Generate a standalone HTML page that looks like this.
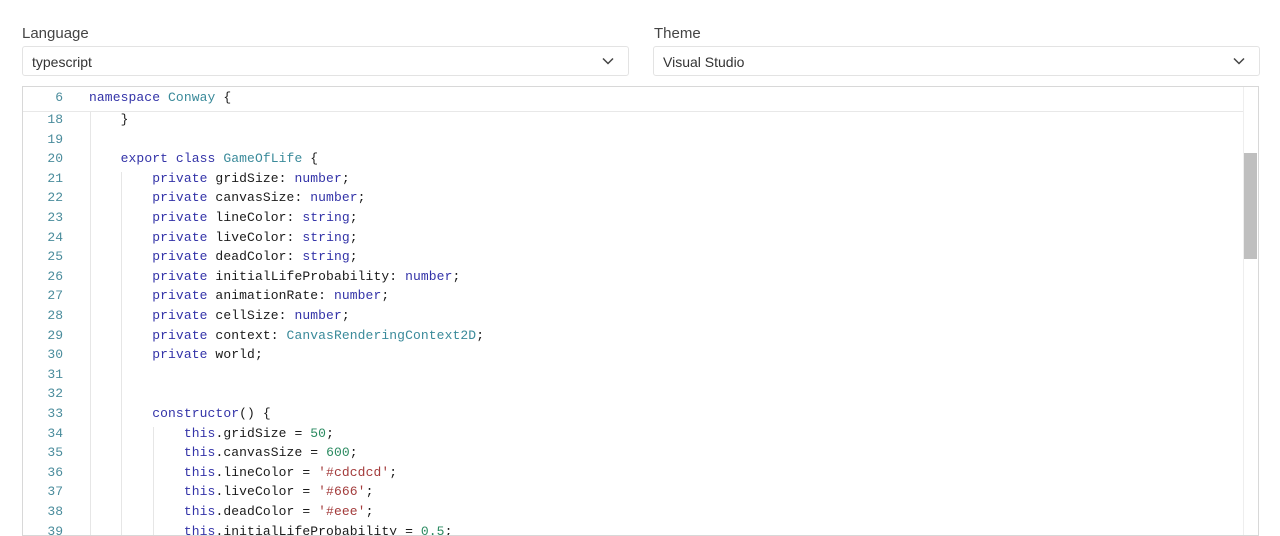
<!DOCTYPE html>
<html><head><meta charset="utf-8"><style>
body{margin:0;width:1280px;height:524px;background:#fff;font-family:"Liberation Sans",sans-serif;overflow:hidden;position:relative}
.lbl{position:absolute;top:25px;font-size:15px;color:#444}
.sel{position:absolute;top:46px;height:30px;border:1px solid #e3e3e3;box-sizing:border-box;border-radius:3px;font-size:14px;color:#333;line-height:30px;padding-left:9px}
.sel svg{position:absolute;right:14px;top:10px}
.ed{position:absolute;left:22px;top:86px;width:1237px;height:450px;border:1px solid #d8d8d8;box-sizing:border-box;overflow:hidden}
.sb{position:absolute;right:0;top:0;width:14px;height:100%;border-left:1px solid #eee;background:#fff}
.th{position:absolute;right:1px;top:66px;width:13px;height:106px;background:#bfbfbf}
.ln{position:absolute;left:0;width:40px;text-align:right;color:#4a8c9c;font-family:"Liberation Mono",monospace;font-size:13px}
.cd{position:absolute;left:66px;font-family:"Liberation Mono",monospace;font-size:13px;color:#1a1a1a;white-space:pre;letter-spacing:0.1px}
.k{color:#3333a8}.t{color:#3a8a9a}.s{color:#a33b3b}.n{color:#2a8a60}
.g{position:absolute;width:1px;background:#e6e6e6}
.sticky{position:absolute;left:0;top:0;right:14px;height:24px;border-bottom:1px solid #e8e8e8;background:#fff}
</style></head><body>
<div class="lbl" style="left:22px">Language</div>
<div class="sel" style="left:22px;width:607px">typescript<svg width="12" height="8" viewBox="0 0 12 8"><path d="M1 1.5 6 6.5 11 1.5" fill="none" stroke="#444" stroke-width="1.5"/></svg></div>
<div class="lbl" style="left:654px">Theme</div>
<div class="sel" style="left:653px;width:607px">Visual Studio<svg width="12" height="8" viewBox="0 0 12 8"><path d="M1 1.5 6 6.5 11 1.5" fill="none" stroke="#444" stroke-width="1.5"/></svg></div>
<div class="ed">
<div class="g" style="left:67px;top:24px;height:430px"></div>
<div class="g" style="left:98px;top:85px;height:370px"></div>
<div class="g" style="left:130px;top:340px;height:120px"></div>
<div class="sticky"></div>
<div class="ln" style="top:3px">6</div><div class="cd" style="top:3px"><span class="k">namespace</span> <span class="t">Conway</span> {</div>
<div id="L"></div>
<div class="sb"><div class="th"></div></div>
</div>
<script>
var lines=[
[18,'    }'],[19,''],[20,'    <span class="k">export class</span> <span class="t">GameOfLife</span> {'],
[21,'        <span class="k">private</span> gridSize: <span class="k">number</span>;'],
[22,'        <span class="k">private</span> canvasSize: <span class="k">number</span>;'],
[23,'        <span class="k">private</span> lineColor: <span class="k">string</span>;'],
[24,'        <span class="k">private</span> liveColor: <span class="k">string</span>;'],
[25,'        <span class="k">private</span> deadColor: <span class="k">string</span>;'],
[26,'        <span class="k">private</span> initialLifeProbability: <span class="k">number</span>;'],
[27,'        <span class="k">private</span> animationRate: <span class="k">number</span>;'],
[28,'        <span class="k">private</span> cellSize: <span class="k">number</span>;'],
[29,'        <span class="k">private</span> context: <span class="t">CanvasRenderingContext2D</span>;'],
[30,'        <span class="k">private</span> world;'],[31,''],[32,''],
[33,'        <span class="k">constructor</span>() {'],
[34,'            <span class="k">this</span>.gridSize = <span class="n">50</span>;'],
[35,'            <span class="k">this</span>.canvasSize = <span class="n">600</span>;'],
[36,'            <span class="k">this</span>.lineColor = <span class="s">\'#cdcdcd\'</span>;'],
[37,'            <span class="k">this</span>.liveColor = <span class="s">\'#666\'</span>;'],
[38,'            <span class="k">this</span>.deadColor = <span class="s">\'#eee\'</span>;'],
[39,'            <span class="k">this</span>.initialLifeProbability = <span class="n">0.5</span>;']];
var h='';lines.forEach(function(l,i){var y=25+i*19.6;h+='<div class="ln" style="top:'+y+'px">'+l[0]+'</div><div class="cd" style="top:'+y+'px">'+l[1]+'</div>';});
document.getElementById('L').innerHTML=h;
</script>
</body></html>
